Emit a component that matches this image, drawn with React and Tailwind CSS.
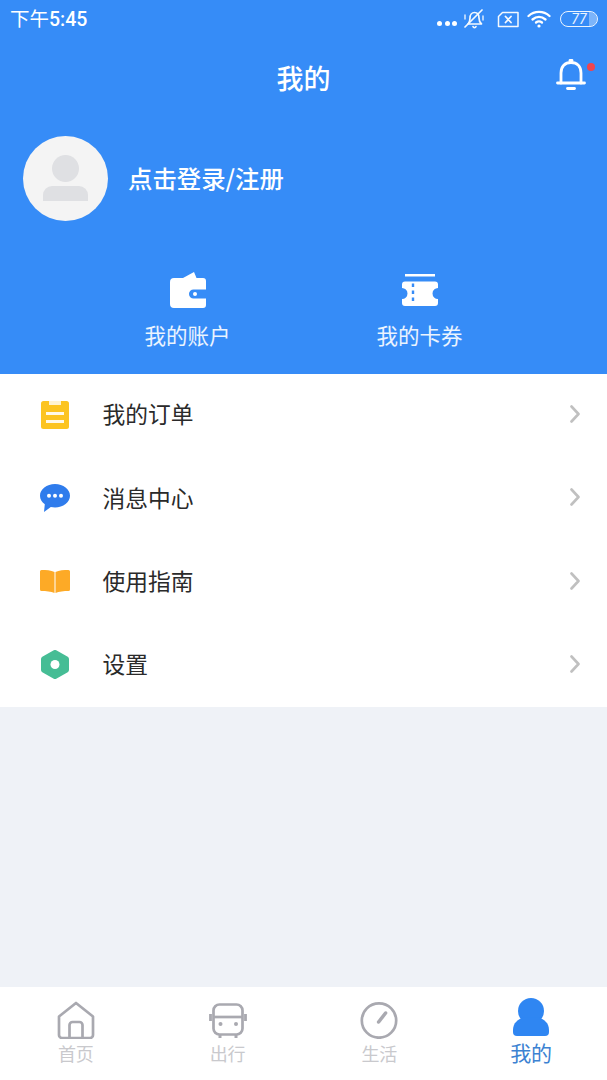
const font = { fontFamily: '"Noto Sans CJK SC", "Noto Sans", sans-serif' };
const timeFont = { fontFamily: 'Roboto, "Noto Sans CJK SC", sans-serif' };

function MutedBell() {
  return (
    <svg width="24" height="22" viewBox="0 0 24 22" fill="none" stroke="#fff" strokeWidth="1.700" strokeLinecap="round" strokeLinejoin="round" className="opacity-95">
      <path d="M6 16c1.500-1.500 2-3 2-6 0-3.500 2-5.500 4.500-5.500S17 6.500 17 10c0 3 .8 4.500 2.500 6H6z" />
      <path d="M11 18.500c.5 1.500 2.500 1.500 3 0" />
      <path d="M3 19 20 2" />
      <path d="M3 7v4M21 8v4" strokeWidth="1.300" />
    </svg>
  );
}

function SimX() {
  return (
    <svg width="23" height="17" viewBox="0 0 23 17" fill="none" stroke="#fff" strokeLinecap="round" strokeLinejoin="round" className="opacity-95">
      <path d="M5.500 1.500H21v14H1.500V5.500z" strokeWidth="1.500" />
      <path d="m8.500 5.500 5.500 6M14 5.500l-5.500 6" strokeWidth="1.800" />
    </svg>
  );
}

function Wifi() {
  return (
    <svg width="24" height="18" viewBox="0 0 24 18" fill="none" stroke="#fff" strokeWidth="2.300" strokeLinecap="round">
      <path d="M1.500 6C7.500.6 16.500.6 22.500 6" />
      <path d="M5.500 9.500c4-3.400 9-3.400 13 0" />
      <path d="M9 12.500c1.800-1.400 4.200-1.400 6 0" />
      <circle cx="12" cy="16" r="1.600" fill="#fff" stroke="none" />
    </svg>
  );
}

function Battery() {
  return (
    <div className="relative w-[38px] h-[16px] rounded-full border-[1.500px] border-white/90 overflow-hidden flex items-center justify-center">
      <div className="absolute right-0 top-0 bottom-0 w-[8px] bg-white/35" />
      <span className="relative text-[14px] leading-none text-white/90 italic" style={timeFont}>77</span>
    </div>
  );
}

function Bell() {
  return (
    <svg width="30" height="31" viewBox="0 0 30 31" fill="none" stroke="#fff" strokeWidth="2.800" strokeLinecap="round" strokeLinejoin="round">
      <path d="M1.500 24h27" />
      <path d="M5 24V14C5 7.500 9 3.500 15 3.500S25 7.500 25 14v10" />
      <path d="M14 1.500h2" />
      <path d="M11.500 29.500h7" />
    </svg>
  );
}

function Avatar() {
  return (
    <div className="w-[85px] h-[85px] rounded-full bg-[#f4f4f4] shrink-0 flex flex-col items-center">
      <div className="w-[27px] h-[27px] rounded-full bg-[#dfe0e3] mt-[19px]" />
      <div className="w-[45px] h-[15px] rounded-t-[9px] bg-[#dfe0e3] mt-[4px]" />
    </div>
  );
}

function WalletIcon() {
  return (
    <svg width="36" height="36" viewBox="0 0 36 36">
      <path d="M13 6 24 0l2.500 6z" fill="#fff" />
      <path d="M4 6h29a3 3 0 0 1 3 3v8.500H23.500a4.500 4.500 0 0 0 0 9H36V33a3 3 0 0 1-3 3H4a4 4 0 0 1-4-4V10a4 4 0 0 1 4-4z" fill="#fff" />
      <circle cx="25" cy="22" r="2" fill="#fff" />
    </svg>
  );
}

function TicketIcon() {
  return (
    <svg width="36" height="32" viewBox="0 0 36 32">
      <rect x="3" y="0" width="30" height="2.500" fill="#fff" />
      <path d="M3 7.500h30a3 3 0 0 1 3 3v3.500a5.500 5.500 0 0 0 0 11V29a3 3 0 0 1-3 3H3a3 3 0 0 1-3-3v-4a5.500 5.500 0 0 0 0-11v-3.500a3 3 0 0 1 3-3z" fill="#fff" />
      <path d="M11 9.500v20" stroke="#368cf7" strokeWidth="2.400" strokeDasharray="3.500 3.500" fill="none" />
    </svg>
  );
}

function OrderIcon() {
  return (
    <svg width="28" height="28" viewBox="0 0 28 28">
      <rect width="28" height="28" rx="2.500" fill="#fcc421" />
      <rect x="8" y="0" width="12" height="4" fill="#fff" fillOpacity=".8" />
      <rect x="5" y="11" width="18" height="3" fill="#fff" fillOpacity=".9" />
      <rect x="5" y="19" width="18" height="3" fill="#fff" fillOpacity=".9" />
    </svg>
  );
}

function ChatIcon() {
  return (
    <svg width="30" height="28" viewBox="0 0 30 28">
      <path d="M15 0c8.300 0 15 5.200 15 11.700S23.300 23.500 15 23.500c-1.500 0-2.800-.2-4.200-.5L4 28l.8-7.800C1.800 18 0 15 0 11.700 0 5.200 6.700 0 15 0z" fill="#2f7cec" />
      <circle cx="9" cy="11.700" r="2" fill="#fff" />
      <circle cx="15" cy="11.700" r="2" fill="#fff" />
      <circle cx="21" cy="11.700" r="2" fill="#fff" />
    </svg>
  );
}

function BookIcon() {
  return (
    <svg width="30" height="23" viewBox="0 0 30 23">
      <path d="M1.500 0C6 0 11 .3 14.500 2v21C11 21.500 6 21 1.500 21A1.500 1.500 0 0 1 0 19.500v-18A1.500 1.500 0 0 1 1.500 0z" fill="#fdaa26" />
      <path d="M28.500 0C24 0 19 .3 15.500 2v21c3.500-1.500 8.500-2 13-2a1.500 1.500 0 0 0 1.500-1.500v-18A1.500 1.500 0 0 0 28.500 0z" fill="#fdaa26" />
    </svg>
  );
}

function HexIcon() {
  return (
    <svg width="28" height="29" viewBox="0 0 28 29">
      <path d="M14 2.500 25.500 9v11L14 26.500 2.500 20V9z" fill="#46bd95" stroke="#46bd95" strokeWidth="5" strokeLinejoin="round" />
      <circle cx="14" cy="14.500" r="4.500" fill="#fff" />
    </svg>
  );
}

function Chevron() {
  return (
    <svg width="10" height="18" viewBox="0 0 10 18" fill="none" stroke="#c0c0c0" strokeWidth="2.600" strokeLinecap="round" strokeLinejoin="round">
      <path d="m1.500 1.500 7 7.500-7 7.500" />
    </svg>
  );
}

function HomeIcon() {
  return (
    <svg width="38" height="38" viewBox="0 0 38 38" fill="none" stroke="#a9a9b0" strokeWidth="2.700" strokeLinejoin="round" strokeLinecap="round">
      <path d="M2 15.500 19 2l17 13.500V34a3 3 0 0 1-3 3H5a3 3 0 0 1-3-3z" />
      <path d="M12.500 37V24a3 3 0 0 1 3-3h7a3 3 0 0 1 3 3v13" />
    </svg>
  );
}

function BusIcon() {
  return (
    <svg width="38" height="36" viewBox="0 0 38 36" fill="none" stroke="#a9a9b0" strokeWidth="2.700">
      <rect x="4.500" y="1.500" width="29" height="30" rx="6" />
      <path d="M4.500 14h29" />
      <path d="M1.500 11v7M36.500 11v7" strokeWidth="2.800" />
      <circle cx="11.500" cy="21" r="2" fill="#a9a9b0" stroke="none" />
      <circle cx="27" cy="21" r="2" fill="#a9a9b0" stroke="none" />
      <path d="M11 32v3M27 32v3" strokeWidth="3" />
    </svg>
  );
}

function ClockIcon() {
  return (
    <svg width="38" height="38" viewBox="0 0 38 38" fill="none" stroke="#a9a9b0">
      <circle cx="19" cy="19.500" r="17.200" strokeWidth="2.700" />
      <path d="m18.600 21 7-9" strokeWidth="3.500" strokeLinecap="round" />
    </svg>
  );
}

function PersonIcon() {
  return (
    <svg width="36" height="38" viewBox="0 0 36 38" fill="#2f86f2" className="mb-[3px]">
      <circle cx="18" cy="13" r="13" />
      <path d="M0 32c0-7 5-11 11-12.500h14C31 21 36 25 36 32v2a4 4 0 0 1-4 4H4a4 4 0 0 1-4-4z" />
    </svg>
  );
}

function QuickAction({ icon, label }) {
  return (
    <div className="w-[232px] flex flex-col items-center">
      <div className="h-[36px] flex items-center">{icon}</div>
      <div className="text-[21.500px] leading-[30px] mt-[12px] text-white/90">{label}</div>
    </div>
  );
}

function MenuRow({ icon, label }) {
  return (
    <div className="h-[83.250px] flex items-center pb-[2px]">
      <div className="w-[30px] ml-[40px] flex justify-center shrink-0">{icon}</div>
      <div className="ml-[32.500px] text-[22.750px] text-[#2a2a2a] leading-none">{label}</div>
      <div className="ml-auto mr-[27px] mb-[1px]"><Chevron /></div>
    </div>
  );
}

function NavItem({ icon, label, active }) {
  return (
    <div className="flex-1 flex flex-col items-center">
      <div className="h-[38px] flex items-end">{icon}</div>
      <div className={active ? "text-[21px] leading-[26px] text-[#3c82d2]" : "text-[18px] leading-[26px] mt-[1px] text-[#c9c9cd]"}>{label}</div>
    </div>
  );
}

export default function App() {
  return (
    <div className="w-[607px] h-[1080px] flex flex-col bg-[#eff2f7] overflow-hidden" style={font}>
      <div className="h-[374px] bg-[#368cf7] text-white flex flex-col shrink-0">
        <div className="h-[38px] flex items-center pl-[10px] pr-[9px]">
          <span className="text-[19.500px] leading-none mt-[1px]" style={timeFont}>下午<span className="font-medium">5:45</span></span>
          <div className="ml-auto flex items-center">
            <div className="flex gap-[2.500px] mt-[9px]">
              <span className="w-[5px] h-[5px] rounded-full bg-white" />
              <span className="w-[5px] h-[5px] rounded-full bg-white" />
              <span className="w-[5px] h-[5px] rounded-full bg-white" />
            </div>
            <div className="ml-[5px]"><MutedBell /></div>
            <div className="ml-[11px]"><SimX /></div>
            <div className="ml-[7px]"><Wifi /></div>
            <div className="ml-[9px]"><Battery /></div>
          </div>
        </div>
        <div className="relative h-[80px] flex items-center justify-center">
          <span className="text-[27px] leading-none font-medium -mt-[1px]">我的</span>
          <div className="absolute left-[556px] top-[21px]"><Bell /></div>
          <span className="absolute left-[587px] top-[25px] w-[8px] h-[8px] rounded-full bg-[#f0454f]" />
        </div>
        <div className="flex items-center pl-[23px] mt-[18px]">
          <Avatar />
          <span className="ml-[20px] text-[24.400px] leading-none font-medium -mt-[1px]">点击登录/注册</span>
        </div>
        <div className="flex justify-center mt-[51px]">
          <QuickAction icon={<WalletIcon />} label="我的账户" />
          <QuickAction icon={<TicketIcon />} label="我的卡券" />
        </div>
      </div>

      <div className="bg-white shrink-0">
        <MenuRow icon={<OrderIcon />} label="我的订单" />
        <MenuRow icon={<ChatIcon />} label="消息中心" />
        <MenuRow icon={<BookIcon />} label="使用指南" />
        <MenuRow icon={<HexIcon />} label="设置" />
      </div>

      <div className="flex-1" />

      <div className="h-[93px] bg-white flex pt-[14px] shrink-0">
        <NavItem icon={<HomeIcon />} label="首页" />
        <NavItem icon={<BusIcon />} label="出行" />
        <NavItem icon={<ClockIcon />} label="生活" />
        <NavItem icon={<PersonIcon />} label="我的" active />
      </div>
    </div>
  );
}
